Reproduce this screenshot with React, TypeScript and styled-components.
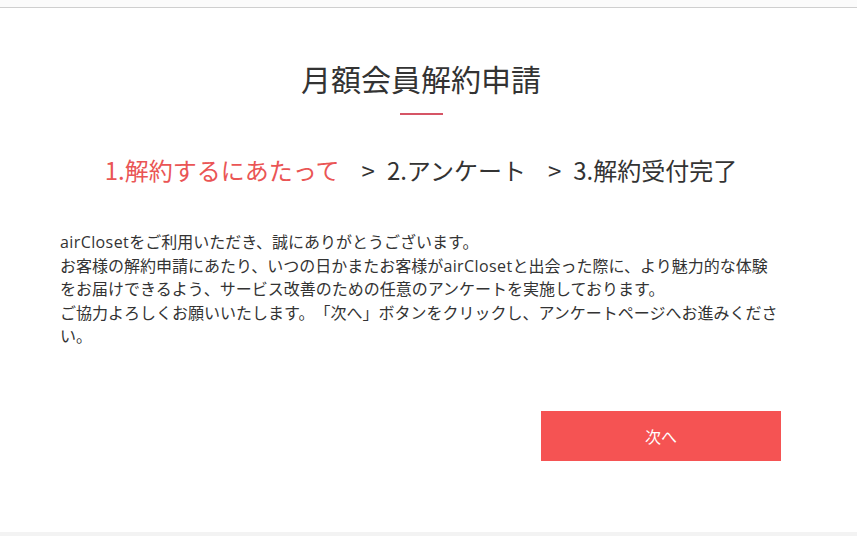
import React from 'react';
import styled, { createGlobalStyle } from 'styled-components';

const GlobalStyle = createGlobalStyle`
  html, body {
    margin: 0;
    padding: 0;
    background: #ffffff;
  }
  body {
    font-family: "Open Sans", "Noto Sans CJK JP", sans-serif;
    color: #333333;
    text-spacing-trim: space-all;
  }
`;

const Page = styled.div`
  display: flex;
  flex-direction: column;
  min-height: 536px;
`;

const TopBar = styled.div`
  height: 7px;
  background: #fbfbfb;
  border-bottom: 1px solid #cfcfcf;
`;

const Main = styled.main`
  flex: 1;
  display: flex;
  flex-direction: column;
  width: 722px;
  margin-left: 60px;
`;

const Title = styled.h1`
  margin: 50px 0 0;
  text-align: center;
  font-family: "Noto Sans CJK JP", sans-serif;
  font-weight: 400;
  font-size: 30px;
  line-height: 40px;
  color: #333333;
`;

const TitleRule = styled.div`
  align-self: center;
  width: 43px;
  height: 2px;
  margin-top: 15px;
  background: #d65566;
`;

const Steps = styled.ol`
  list-style: none;
  display: flex;
  justify-content: center;
  gap: 22px;
  margin: 38px 0 0;
  padding: 0;
  font-family: "Noto Sans CJK JP", sans-serif;
  font-size: 24px;
  line-height: 34px;
  white-space: nowrap;
`;

const Step = styled.li<{ $active?: boolean }>`
  color: ${(p) => (p.$active ? '#ea5555' : '#333333')};
`;

const Sep = styled.span`
  margin-right: 12px;
`;

const Body = styled.div`
  margin-top: 44px;
  width: 730px;
  font-family: "Open Sans", "Noto Sans CJK JP", sans-serif;
  font-size: 16px;
  line-height: 23.5px;
  color: #333333;

  p {
    margin: 0;
  }
`;

const Brand = styled.span`
  letter-spacing: 0.4px;
`;

const Actions = styled.div`
  display: flex;
  justify-content: flex-end;
  margin-top: 62px;
  margin-right: 1px;
`;

const NextButton = styled.button`
  width: 240px;
  height: 50px;
  border: none;
  border-radius: 0;
  background: #f55353;
  color: #ffffff;
  font-family: "Noto Sans CJK JP", sans-serif;
  font-size: 16px;
  cursor: pointer;
`;

const Footer = styled.div`
  height: 4px;
  background: #f3f3f3;
`;

const App: React.FC = () => {
  return (
    <>
      <GlobalStyle />
      <Page>
        <TopBar />
        <Main>
          <Title>月額会員解約申請</Title>
          <TitleRule />
          <Steps>
            <Step $active>1.解約するにあたって</Step>
            <Step>
              <Sep>&gt;</Sep>2.アンケート
            </Step>
            <Step>
              <Sep>&gt;</Sep>3.解約受付完了
            </Step>
          </Steps>
          <Body>
            <p>
              <Brand>airCloset</Brand>をご利用いただき、誠にありがとうございます。
            </p>
            <p>
              お客様の解約申請にあたり、いつの日かまたお客様が<Brand>airCloset</Brand>と出会った際に、より魅力的な体験
              <br />
              をお届けできるよう、サービス改善のための任意のアンケートを実施しております。
            </p>
            <p>
              ご協力よろしくお願いいたします。「次へ」ボタンをクリックし、アンケートページへお進みくださ
              <br />
              い。
            </p>
          </Body>
          <Actions>
            <NextButton type="button">次へ</NextButton>
          </Actions>
        </Main>
        <Footer />
      </Page>
    </>
  );
};

export default App;
